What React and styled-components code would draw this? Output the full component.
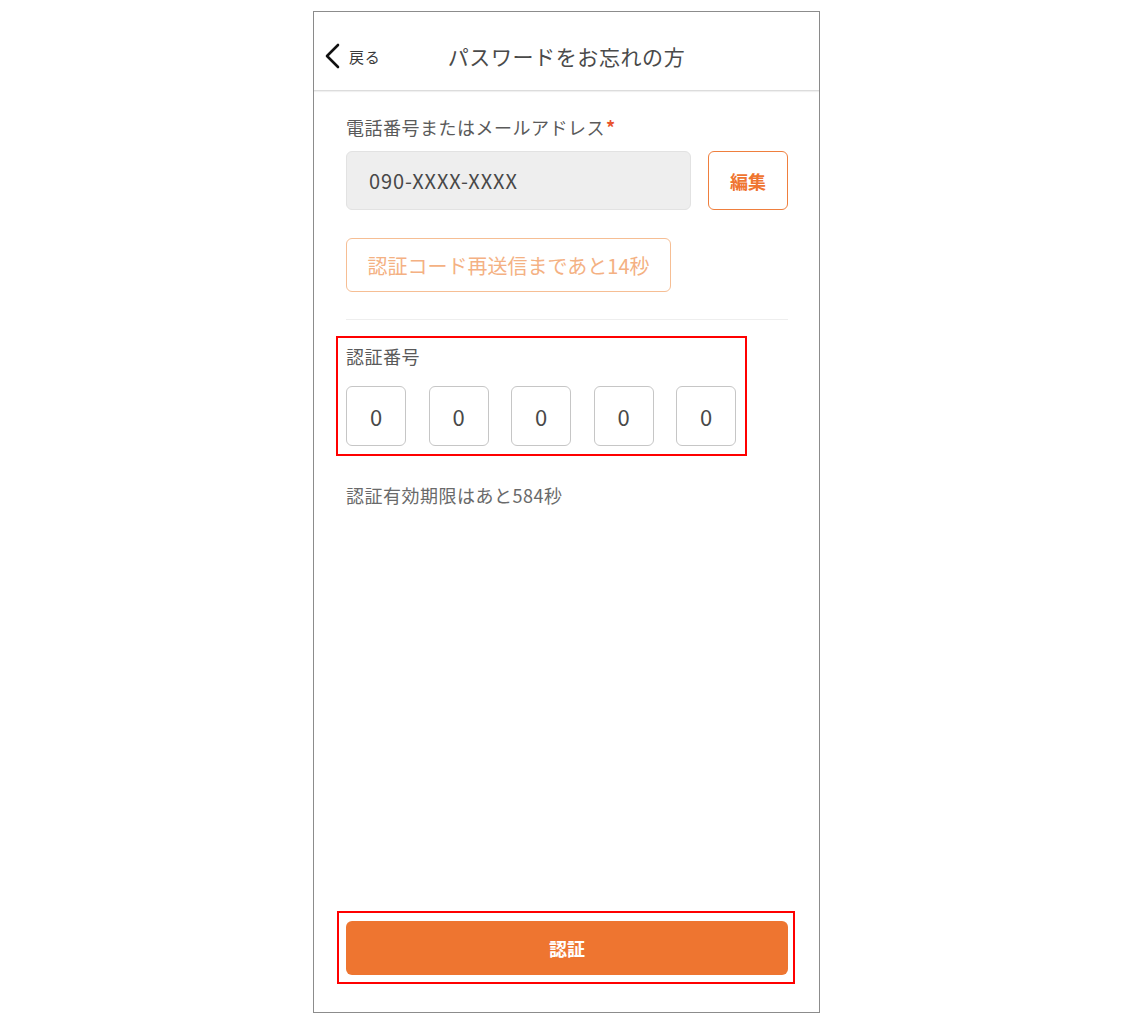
import React from "react";
import styled, { createGlobalStyle } from "styled-components";

const Global = createGlobalStyle`
  html, body { margin: 0; padding: 0; background: #ffffff; }
  body { font-family: "Noto Sans CJK JP", "Noto Sans", sans-serif; color: #444; }
  * { box-sizing: border-box; }
`;

const Frame = styled.div`
  width: 507px;
  height: 1002px;
  margin: 11px 0 0 313px;
  border: 1px solid #8c8c8c;
  display: flex;
  flex-direction: column;
  background: #fff;
`;

const Header = styled.header`
  height: 79px;
  flex-shrink: 0;
  display: grid;
  grid-template-columns: 1fr auto 1fr;
  align-items: center;
  border-bottom: 1px solid #dcdcdc;
  box-shadow: 0 1px 1px rgba(0, 0, 0, 0.06);
  padding-top: 10px;
`;

const BackButton = styled.button`
  justify-self: start;
  display: flex;
  align-items: center;
  gap: 9px;
  background: none;
  border: none;
  padding: 0 0 0 10px;
  font-family: inherit;
  font-size: 15px;
  letter-spacing: 0.8px;
  color: #3a3a3a;
  cursor: pointer;
`;

const Title = styled.h1`
  margin: 0;
  font-size: 21px;
  font-weight: 400;
  letter-spacing: 0.6px;
  color: #4a4a4a;
`;

const Content = styled.main`
  flex: 1;
  display: flex;
  flex-direction: column;
  padding: 23px 31px 0 32px;
`;

const Label = styled.div`
  font-size: 18px;
  line-height: 26px;
  letter-spacing: 0.5px;
  color: #5a5a5a;
`;

const Required = styled.span`
  color: #e8542e;
  font-weight: 700;
  margin-left: 1px;
`;

const InputRow = styled.div`
  display: flex;
  gap: 17px;
  margin-top: 11px;
  height: 59px;
`;

const PhoneInput = styled.div`
  flex: 1;
  display: flex;
  align-items: center;
  padding-left: 22px;
  background: #eeeeee;
  border: 1px solid #e2e2e2;
  border-radius: 6px;
  font-size: 20px;
  letter-spacing: 0.9px;
  color: #484848;
`;

const OutlineButton = styled.button`
  display: flex;
  align-items: center;
  justify-content: center;
  background: #fff;
  border: 1.5px solid ${(p) => (p.$faded ? "#f6be94" : "#ef7f3e")};
  color: ${(p) => (p.$faded ? "#f4b183" : "#ef7530")};
  border-radius: 6px;
  font-family: inherit;
  font-size: ${(p) => (p.$faded ? "20px" : "18px")};
  font-weight: ${(p) => (p.$faded ? 400 : 700)};
  width: ${(p) => p.$width}px;
  height: ${(p) => p.$height}px;
  padding: 0;
  cursor: pointer;
`;

const ResendWrap = styled.div`
  margin-top: 28px;
`;

const Divider = styled.hr`
  margin: 27px 0 0;
  border: none;
  border-top: 1px solid #eeeeee;
`;

const Marked = styled.div`
  border: 2px solid #ff0000;
`;

const CodeSection = styled(Marked)`
  align-self: flex-start;
  margin: 16px 0 0 -10px;
  padding: 5px 9px 8px 8px;
`;

const CodeRow = styled.div`
  display: flex;
  gap: 22.5px;
  margin-top: 17px;
`;

const CodeBox = styled.div`
  width: 60px;
  height: 60px;
  border: 1.5px solid #c6c6c6;
  border-radius: 6px;
  display: flex;
  align-items: center;
  justify-content: center;
  font-size: 22px;
  color: #484848;
`;

const Expiry = styled.p`
  margin: 27px 0 0;
  font-size: 18px;
  line-height: 24px;
  letter-spacing: 0.5px;
  color: #6a6a6a;
`;

const Footer = styled(Marked)`
  margin: auto -7px 28px -9px;
  padding: 8px 5px 7px 7px;
`;

const PrimaryButton = styled.button`
  width: 100%;
  height: 54px;
  background: #ee7530;
  border: none;
  border-radius: 6px;
  color: #fff;
  font-family: inherit;
  font-size: 18px;
  font-weight: 700;
  cursor: pointer;
`;

const Chevron = () => (
  <svg width="16" height="26" viewBox="0 0 16 26" fill="none">
    <polyline points="14,2 3,13 14,24" stroke="#111" strokeWidth="2.6" strokeLinecap="round" strokeLinejoin="round" />
  </svg>
);

export default function App() {
  return (
    <>
      <Global />
      <Frame>
        <Header>
          <BackButton>
            <Chevron />
            戻る
          </BackButton>
          <Title>パスワードをお忘れの方</Title>
          <div />
        </Header>
        <Content>
          <Label>
            電話番号またはメールアドレス<Required>*</Required>
          </Label>
          <InputRow>
            <PhoneInput>090-XXXX-XXXX</PhoneInput>
            <OutlineButton $width={80} $height={59}>編集</OutlineButton>
          </InputRow>
          <ResendWrap>
            <OutlineButton $faded $width={325} $height={54}>
              認証コード再送信まであと14秒
            </OutlineButton>
          </ResendWrap>
          <Divider />
          <CodeSection>
            <Label>認証番号</Label>
            <CodeRow>
              {[0, 1, 2, 3, 4].map((i) => (
                <CodeBox key={i}>0</CodeBox>
              ))}
            </CodeRow>
          </CodeSection>
          <Expiry>認証有効期限はあと584秒</Expiry>
          <Footer>
            <PrimaryButton>認証</PrimaryButton>
          </Footer>
        </Content>
      </Frame>
    </>
  );
}
